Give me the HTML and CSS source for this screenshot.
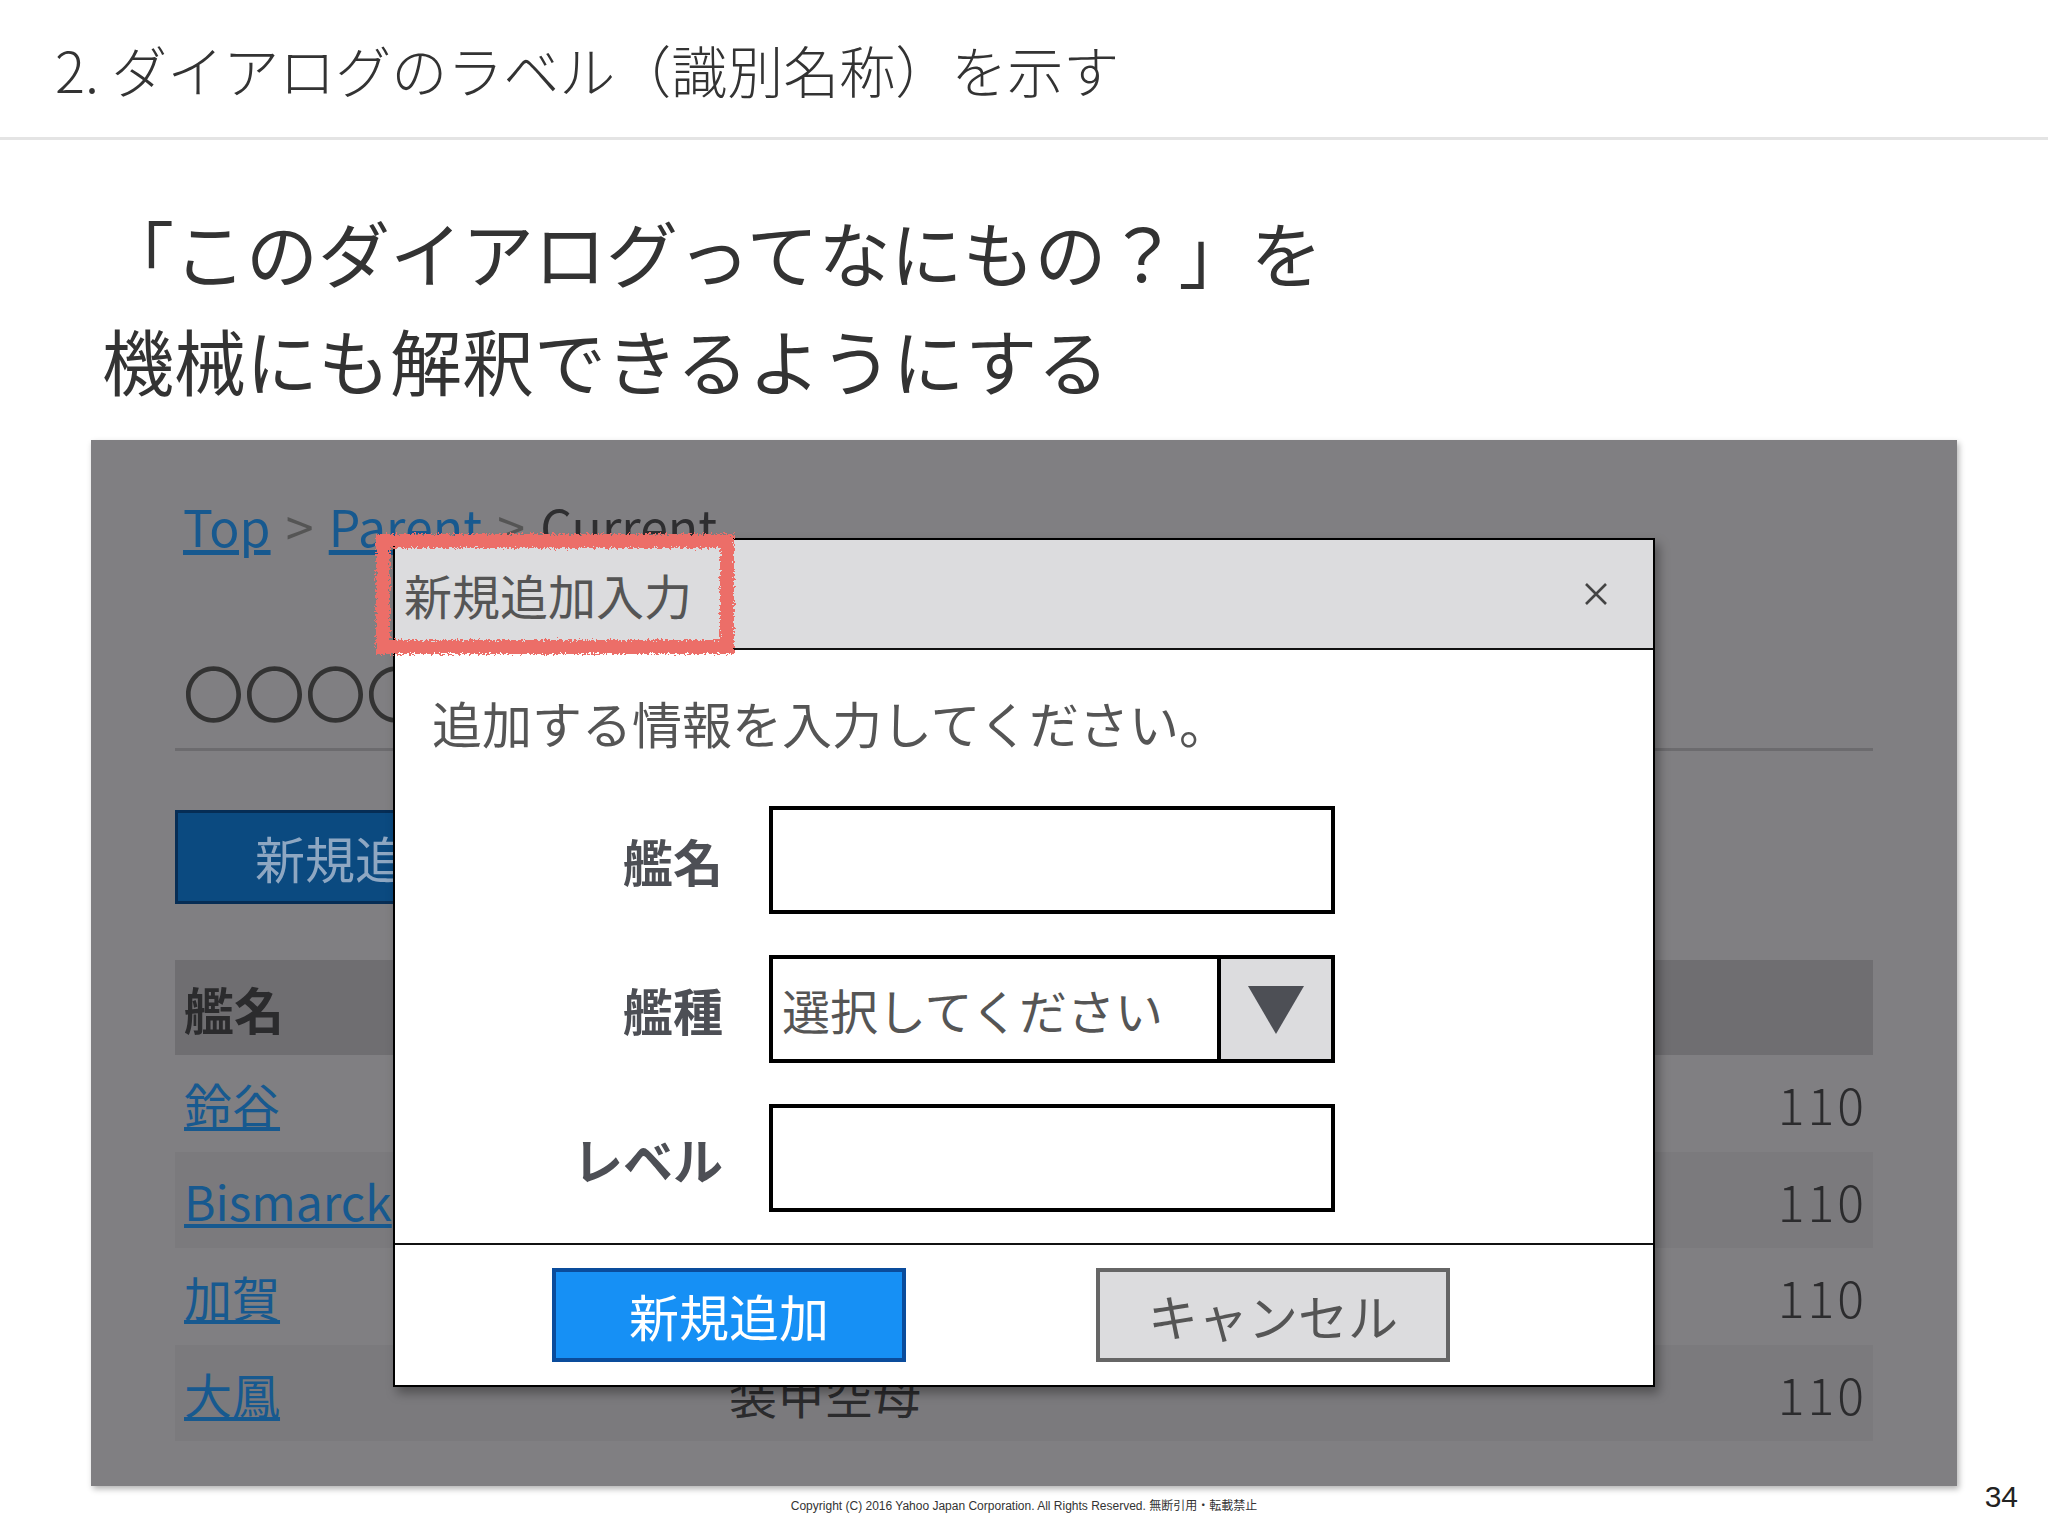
FILE: index.html
```html
<!DOCTYPE html>
<html lang="ja">
<head>
    <meta charset="UTF-8">
    <title>2. ダイアログのラベル（識別名称）を示す</title>
    <link rel="stylesheet" href="styles.css">
</head>
<body>
    <div class="slide">
        <header class="slide-header">
            <h1 class="slide-title">2. ダイアログのラベル（識別名称）を示す</h1>
        </header>

        <p class="lead">「このダイアログってなにもの？」を<br>機械にも解釈できるようにする</p>

        <div class="mock">
            <!-- page behind the modal -->
            <div class="mock-page">
                <nav class="breadcrumb">
                    <a href="#">Top</a> <span class="sep">&gt;</span> <a href="#">Parent</a> <span class="sep">&gt;</span> <span class="current">Current</span>
                </nav>
                <h2 class="page-heading">〇〇〇〇〇〇</h2>
                <button class="add-button">新規追加</button>
                <table class="ship-table">
                    <colgroup>
                        <col class="col-name">
                        <col>
                        <col class="col-level">
                    </colgroup>
                    <thead>
                        <tr><th>艦名</th><th>艦種</th><th></th></tr>
                    </thead>
                    <tbody>
                        <tr><td><a href="#">鈴谷</a></td><td>重巡洋艦</td><td class="level">110</td></tr>
                        <tr><td><a href="#">Bismarck</a></td><td>戦艦</td><td class="level">110</td></tr>
                        <tr><td><a href="#">加賀</a></td><td>正規空母</td><td class="level">110</td></tr>
                        <tr><td><a href="#">大鳳</a></td><td>装甲空母</td><td class="level">110</td></tr>
                    </tbody>
                </table>
            </div>

            <!-- modal dialog -->
            <div class="dialog" role="dialog" aria-labelledby="dialog-title">
                <div class="dialog-header">
                    <h3 class="dialog-title" id="dialog-title">新規追加入力</h3>
                    <svg class="close" width="26" height="26" viewBox="0 0 26 26">
                        <path d="M3 3 L23 23 M23 3 L3 23" stroke="#444" stroke-width="2.6" fill="none"/>
                    </svg>
                </div>
                <div class="dialog-body">
                    <p class="dialog-text">追加する情報を入力してください。</p>
                    <div class="form">
                        <label class="form-label">艦名</label>
                        <input class="form-input" type="text">
                        <label class="form-label">艦種</label>
                        <div class="select">
                            <span class="select-value">選択してください</span>
                            <span class="select-arrow">
                                <svg width="56" height="50" viewBox="0 0 56 50"><polygon points="0,2 56,2 28,50" fill="#4d4f55"/></svg>
                            </span>
                        </div>
                        <label class="form-label">レベル</label>
                        <input class="form-input" type="text">
                    </div>
                </div>
                <div class="dialog-footer">
                    <button class="btn btn-primary">新規追加</button>
                    <button class="btn btn-cancel">キャンセル</button>
                </div>

                <svg class="highlight" width="368" height="128" viewBox="0 0 368 128">
                    <defs>
                        <filter id="rough" x="-10%" y="-10%" width="120%" height="120%">
                            <feTurbulence type="fractalNoise" baseFrequency="0.45" numOctaves="2" result="noise"/>
                            <feDisplacementMap in="SourceGraphic" in2="noise" scale="8" xChannelSelector="R" yChannelSelector="G"/>
                        </filter>
                    </defs>
                    <rect x="11" y="11" width="344" height="106" fill="none" stroke="#ec6e67" stroke-width="14" filter="url(#rough)"/>
                </svg>
            </div>
        </div>

        <footer class="slide-footer">
            <span></span>
            <span class="copyright">Copyright (C) 2016 Yahoo Japan Corporation. All Rights Reserved. 無断引用・転載禁止</span>
            <span class="page-num">34</span>
        </footer>
    </div>
</body>
</html>
```

FILE: styles.css
```css
* {
    box-sizing: border-box;
}

body {
    margin: 0;
    background-color: #fff;
    font-family: "Noto Sans CJK JP", sans-serif;
    color: #333;
}

.slide {
    width: 2048px;
    height: 1536px;
    display: flex;
    flex-direction: column;
}

.slide-header {
    height: 140px;
    display: flex;
    align-items: center;
    padding-left: 55px;
    border-bottom: 3px solid #e4e4e4;
}

.slide-title {
    margin: 0;
    font-size: 56px;
    font-weight: 300;
    line-height: 1;
    color: #333;
}

.lead {
    margin: 57px 0 0;
    padding-left: 102px;
    font-size: 72px;
    line-height: 108px;
    color: #333;
}

/* screenshot of the page with the modal open */
.mock {
    position: relative;
    margin: 27px 0 0 91px;
    width: 1866px;
    height: 1046px;
    background-color: #807f82;
    box-shadow: 2px 3px 6px rgba(0, 0, 0, 0.3);
}

.mock-page {
    padding: 50px 84px 0;
}

.breadcrumb {
    margin-left: 8px;
    font-size: 50px;
    line-height: 70px;
    word-spacing: 4px;
    color: #4e4e50;
}

.breadcrumb a {
    color: #17598f;
}

.breadcrumb .sep {
    color: #555;
}

.breadcrumb .current {
    color: #2e2e30;
}

.page-heading {
    margin: 92px 0 0;
    padding: 0 0 16px 8px;
    font-size: 61px;
    font-weight: 400;
    line-height: 80px;
    color: #333;
    border-bottom: 3px solid #6c6b6e;
}

.add-button {
    display: block;
    margin-top: 59px;
    width: 360px;
    height: 94px;
    background-color: #0b4a80;
    border: 3px solid #062d55;
    color: #8ea7c2;
    font-family: inherit;
    font-size: 50px;
}

.ship-table {
    margin-top: 56px;
    width: 100%;
    border-collapse: collapse;
}

.col-name {
    width: 545px;
}

.col-level {
    width: 300px;
}

.ship-table th,
.ship-table td {
    padding: 0 9px;
    text-align: left;
    color: #2b2b2d;
}

.ship-table th {
    height: 95px;
    background-color: #6f6e71;
    font-size: 50px;
    font-weight: 700;
}

.ship-table td {
    height: 96.5px;
    font-size: 48px;
}

.ship-table tbody tr:nth-child(even) {
    background-color: #7b7a7d;
}

.ship-table td a {
    color: #17598f;
}

.ship-table td.level {
    text-align: right;
    font-weight: 300;
    font-size: 50px;
    letter-spacing: 3px;
    padding-right: 6px;
}

/* dialog */
.dialog {
    position: absolute;
    left: 302px;
    top: 98px;
    width: 1262px;
    height: 849px;
    display: flex;
    flex-direction: column;
    background-color: #fff;
    border: 2px solid #000;
    box-shadow: 4px 6px 10px rgba(0, 0, 0, 0.35);
}

.dialog-header {
    height: 110px;
    flex-shrink: 0;
    display: flex;
    align-items: center;
    justify-content: space-between;
    padding: 0 44px 0 9px;
    background-color: #dcdcde;
    border-bottom: 2px solid #111;
}

.dialog-title {
    margin: 0;
    font-size: 48px;
    font-weight: 400;
    color: #555;
}

.dialog-body {
    padding: 37px 0 31px 37px;
}

.dialog-text {
    margin: 0;
    font-size: 50px;
    line-height: 70px;
    color: #555;
}

.form {
    margin-top: 49px;
    display: grid;
    grid-template-columns: 291px 566px;
    grid-auto-rows: 108px;
    column-gap: 46px;
    row-gap: 41px;
}

.form-label {
    align-self: center;
    text-align: right;
    font-size: 50px;
    font-weight: 700;
    color: #4d4f55;
}

.form-input {
    width: 100%;
    height: 108px;
    margin: 0;
    background-color: #fff;
    border: 4px solid #000;
}

.select {
    display: flex;
    height: 108px;
    border: 4px solid #000;
}

.select-value {
    flex: 1;
    display: flex;
    align-items: center;
    padding-left: 9px;
    font-size: 48px;
    color: #555;
}

.select-arrow {
    width: 114px;
    display: flex;
    align-items: center;
    justify-content: center;
    background-color: #dcdcde;
    border-left: 4px solid #000;
}

.dialog-footer {
    flex: 1;
    display: flex;
    gap: 190px;
    padding: 23px 0 0 157px;
    border-top: 2px solid #111;
}

.btn {
    width: 354px;
    height: 94px;
    font-family: inherit;
    font-size: 50px;
}

.btn-primary {
    background-color: #1690f5;
    border: 4px solid #0a4c9c;
    color: #fff;
}

.btn-cancel {
    background-color: #dcdcde;
    border: 4px solid #666;
    color: #555;
}

.highlight {
    position: absolute;
    left: -23px;
    top: -10px;
    pointer-events: none;
}

.slide-footer {
    display: grid;
    grid-template-columns: 1fr auto 1fr;
    align-items: start;
}

.copyright {
    margin-top: 13px;
    font-family: "Liberation Sans", Arial, "Noto Sans CJK JP", sans-serif;
    font-size: 12px;
    line-height: 14px;
    color: #333;
}

.page-num {
    justify-self: end;
    margin-top: -4px;
    padding-right: 30px;
    font-family: "Liberation Sans", Arial, sans-serif;
    font-size: 30px;
    line-height: 30px;
    color: #222;
}
```
